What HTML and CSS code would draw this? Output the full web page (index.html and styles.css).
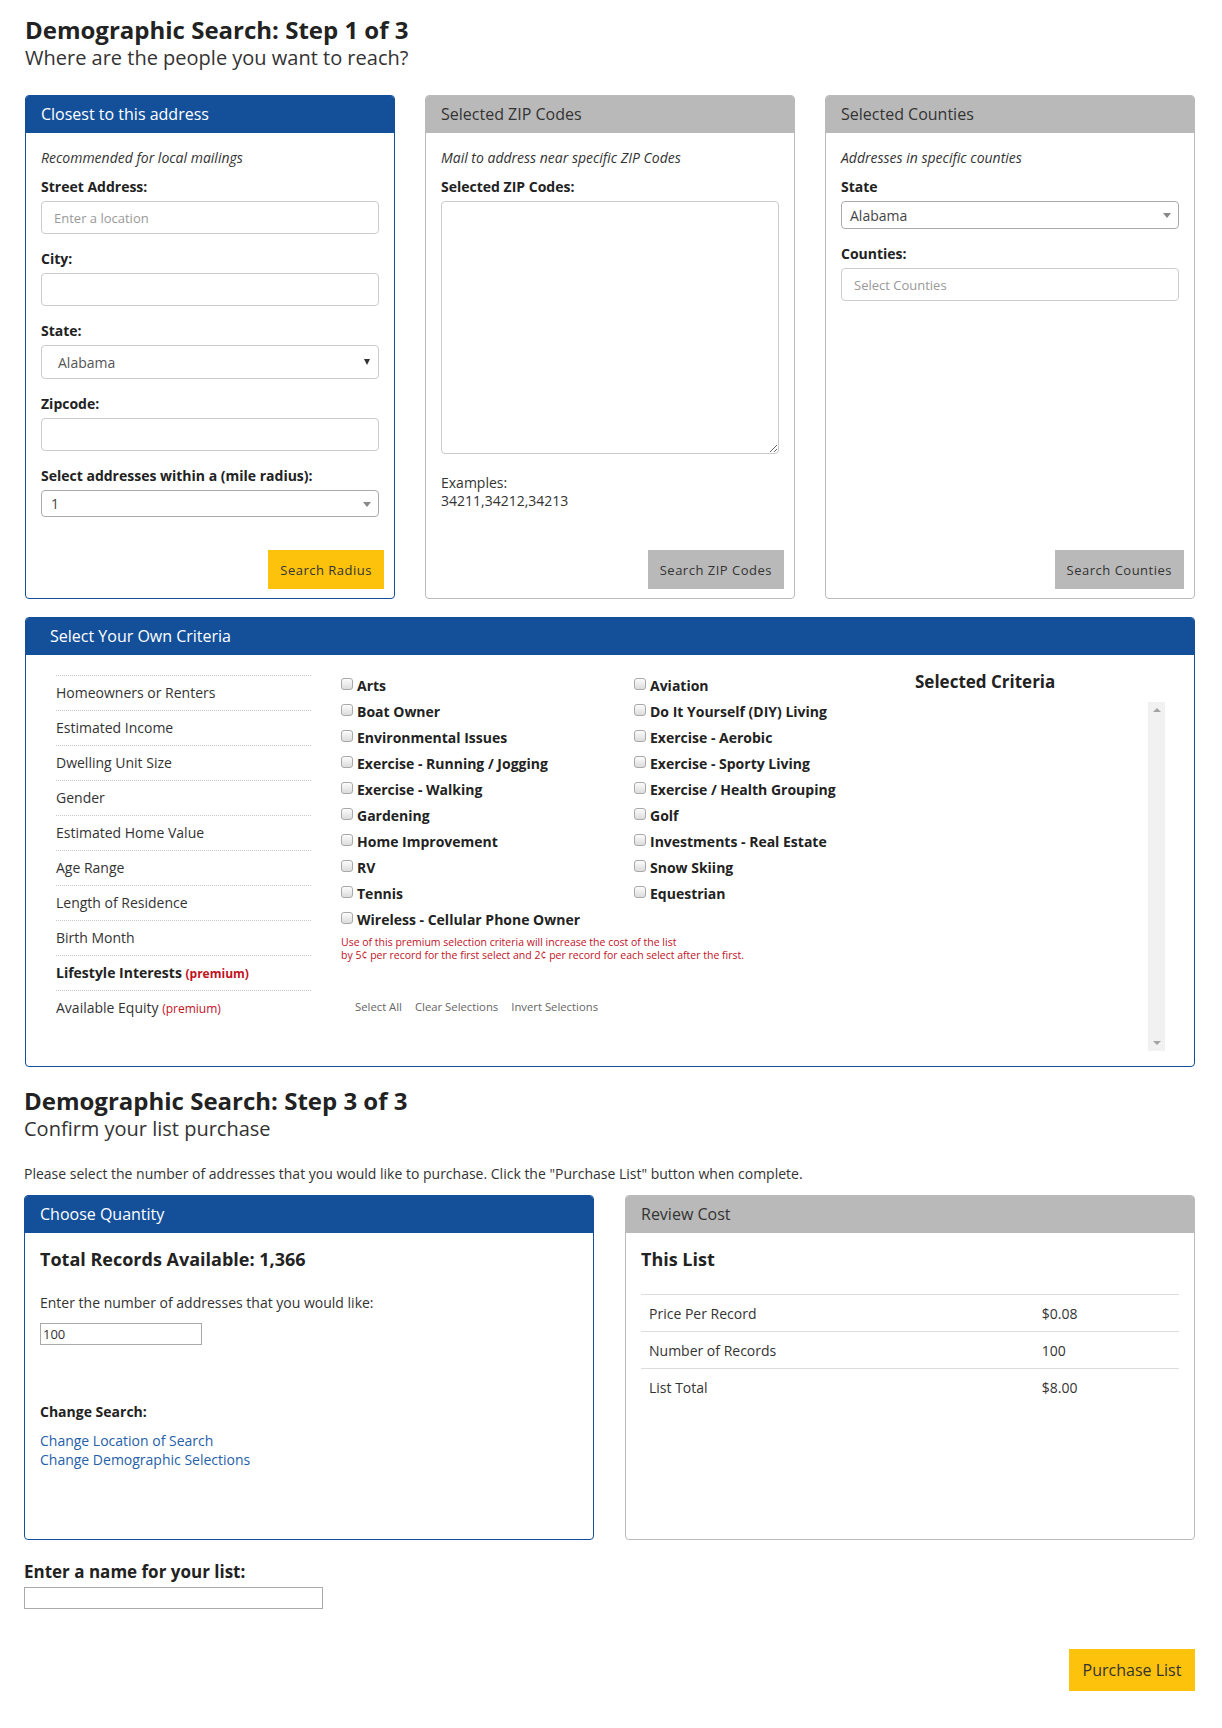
FILE: index.html
```html
<!DOCTYPE html>
<html lang="en">
<head>
<meta charset="utf-8">
<title>Demographic Search</title>
<link rel="stylesheet" href="styles.css">
</head>
<body>
<div class="page">
  <header class="step-head">
    <h1 class="step-title">Demographic Search: Step 1 of 3</h1>
    <p class="step-sub">Where are the people you want to reach?</p>
  </header>

  <div class="loc-row">
    <section class="panel panel-blue">
      <div class="panel-head">Closest to this address</div>
      <div class="panel-body">
        <p class="hint">Recommended for local mailings</p>
        <div class="field first">
          <label class="field-label">Street Address:</label>
          <input class="text-input" type="text" placeholder="Enter a location">
        </div>
        <div class="field">
          <label class="field-label">City:</label>
          <input class="text-input" type="text">
        </div>
        <div class="field">
          <label class="field-label">State:</label>
          <div class="fake-select native"><span class="sel-text">Alabama</span><span class="caret-dark"></span></div>
        </div>
        <div class="field">
          <label class="field-label">Zipcode:</label>
          <input class="text-input" type="text">
        </div>
        <div class="field">
          <label class="field-label">Select addresses within a (mile radius):</label>
          <div class="fake-select s2 radius"><span class="sel-text">1</span><span class="caret-grey"></span></div>
        </div>
      </div>
      <div class="panel-foot"><button class="btn btn-yellow" type="button">Search Radius</button></div>
    </section>

    <section class="panel">
      <div class="panel-head">Selected ZIP Codes</div>
      <div class="panel-body">
        <p class="hint">Mail to address near specific ZIP Codes</p>
        <div class="field first">
          <label class="field-label">Selected ZIP Codes:</label>
          <textarea class="zip-area"></textarea>
        </div>
        <p class="examples">Examples:<br>34211,34212,34213</p>
      </div>
      <div class="panel-foot"><button class="btn btn-grey" type="button">Search ZIP Codes</button></div>
    </section>

    <section class="panel">
      <div class="panel-head">Selected Counties</div>
      <div class="panel-body">
        <p class="hint">Addresses in specific counties</p>
        <div class="field first">
          <label class="field-label">State</label>
          <div class="fake-select s2 county-state"><span class="sel-text">Alabama</span><span class="caret-grey"></span></div>
        </div>
        <div class="field">
          <label class="field-label">Counties:</label>
          <input class="text-input counties" type="text" placeholder="Select Counties">
        </div>
      </div>
      <div class="panel-foot"><button class="btn btn-grey" type="button">Search Counties</button></div>
    </section>
  </div>

  <section class="panel panel-blue criteria">
    <div class="panel-head wide">Select Your Own Criteria</div>
    <div class="criteria-body">
      <ul class="cat-list">
        <li>Homeowners or Renters</li>
        <li>Estimated Income</li>
        <li>Dwelling Unit Size</li>
        <li>Gender</li>
        <li>Estimated Home Value</li>
        <li>Age Range</li>
        <li>Length of Residence</li>
        <li>Birth Month</li>
        <li class="active">Lifestyle Interests <span class="premium">(premium)</span></li>
        <li>Available Equity <span class="premium">(premium)</span></li>
      </ul>

      <div class="interests">
        <div class="cb-cols">
          <ul class="cb-col first-col">
            <li><span class="cb"></span>Arts</li>
            <li><span class="cb"></span>Boat Owner</li>
            <li><span class="cb"></span>Environmental Issues</li>
            <li><span class="cb"></span>Exercise - Running / Jogging</li>
            <li><span class="cb"></span>Exercise - Walking</li>
            <li><span class="cb"></span>Gardening</li>
            <li><span class="cb"></span>Home Improvement</li>
            <li><span class="cb"></span>RV</li>
            <li><span class="cb"></span>Tennis</li>
            <li><span class="cb"></span>Wireless - Cellular Phone Owner</li>
          </ul>
          <ul class="cb-col">
            <li><span class="cb"></span>Aviation</li>
            <li><span class="cb"></span>Do It Yourself (DIY) Living</li>
            <li><span class="cb"></span>Exercise - Aerobic</li>
            <li><span class="cb"></span>Exercise - Sporty Living</li>
            <li><span class="cb"></span>Exercise / Health Grouping</li>
            <li><span class="cb"></span>Golf</li>
            <li><span class="cb"></span>Investments - Real Estate</li>
            <li><span class="cb"></span>Snow Skiing</li>
            <li><span class="cb"></span>Equestrian</li>
          </ul>
        </div>
        <p class="premium-note">Use of this premium selection criteria will increase the cost of the list<br>by 5¢ per record for the first select and 2¢ per record for each select after the first.</p>
        <div class="sel-links"><a>Select All</a><a>Clear Selections</a><a>Invert Selections</a></div>
      </div>

      <div class="selected">
        <h3 class="selected-title">Selected Criteria</h3>
        <div class="sel-box">
          <div class="scrollbar"><span class="sb-up"></span><span class="sb-down"></span></div>
        </div>
      </div>
    </div>
  </section>

  <section class="confirm">
    <h1 class="step-title">Demographic Search: Step 3 of 3</h1>
    <p class="step-sub">Confirm your list purchase</p>
    <p class="instructions">Please select the number of addresses that you would like to purchase. Click the "Purchase List" button when complete.</p>

    <div class="confirm-row">
      <section class="panel panel-blue tall">
        <div class="panel-head">Choose Quantity</div>
        <div class="panel-body qty-body">
          <h3 class="box-title">Total Records Available: 1,366</h3>
          <p class="qty-label">Enter the number of addresses that you would like:</p>
          <input class="plain-input qty-input" type="text" value="100">
          <p class="change-label">Change Search:</p>
          <div class="change-links">
            <a>Change Location of Search</a>
            <a>Change Demographic Selections</a>
          </div>
        </div>
      </section>

      <section class="panel tall">
        <div class="panel-head">Review Cost</div>
        <div class="panel-body qty-body">
          <h3 class="box-title">This List</h3>
          <table class="cost-table">
            <tr><td>Price Per Record</td><td>$0.08</td></tr>
            <tr><td>Number of Records</td><td>100</td></tr>
            <tr><td>List Total</td><td>$8.00</td></tr>
          </table>
        </div>
      </section>
    </div>

    <div class="name-field">
      <label class="name-label">Enter a name for your list:</label>
      <input class="plain-input name-input" type="text">
    </div>

    <div class="purchase-row"><button class="btn btn-yellow btn-purchase" type="button">Purchase List</button></div>
  </section>
</div>
</body>
</html>
```

FILE: styles.css
```css
* { box-sizing: border-box; }

body {
  margin: 0;
  font-family: "Open Sans", "Liberation Sans", sans-serif;
  font-size: 14px;
  color: #333;
  background: #fff;
}

.page {
  width: 1170px;
  margin: 0 0 0 25px;
  padding: 16px 0 38px;
}

.step-title {
  margin: 0;
  font-size: 24px;
  line-height: 28px;
  font-weight: 700;
  color: #222;
}

.step-sub {
  margin: 1px 0 0;
  font-size: 20px;
  line-height: 26px;
  color: #333;
}

/* ---------- panels ---------- */
.panel {
  display: flex;
  flex-direction: column;
  border: 1px solid #bbb;
  border-radius: 4px;
  overflow: hidden;
  background: #fff;
}

.panel-blue { border-color: #14509a; }

.panel-head {
  height: 37px;
  line-height: 37px;
  padding: 0 15px;
  font-size: 16px;
  background: #b9b9b9;
  color: #333;
}

.panel-blue .panel-head {
  background: #14509a;
  color: #fff;
}

.panel-head.wide { padding-left: 24px; }

.panel-body { padding: 15px 15px 0; }

.panel-foot {
  margin-top: auto;
  padding: 33px 10px 9px;
  display: flex;
  justify-content: flex-end;
}

.loc-row {
  display: flex;
  gap: 30px;
  margin-top: 24px;
}

.loc-row .panel { flex: 1; }

.hint {
  margin: 0 0 9px;
  font-style: italic;
  font-size: 14px;
  line-height: 20px;
  color: #333;
}

.field { margin-top: 15px; }
.field.first { margin-top: 0; }

.field-label {
  display: block;
  font-weight: 700;
  line-height: 20px;
  margin-bottom: 4px;
  color: #222;
}

.text-input {
  display: block;
  width: 100%;
  height: 33px;
  padding: 0 12px;
  border: 1px solid #ccc;
  border-radius: 4px;
  font-family: inherit;
  font-size: 13px;
  color: #555;
  outline: none;
}

.text-input::placeholder { color: #999; }

.fake-select {
  position: relative;
  display: flex;
  align-items: center;
  width: 100%;
  border-radius: 4px;
  background: #fff;
}

.fake-select.native {
  height: 34px;
  border: 1px solid #ccc;
  padding-left: 16px;
  color: #555;
}

.fake-select.s2 {
  border: 1px solid #aaa;
  color: #444;
}

.fake-select.radius { height: 27px; padding-left: 9px; }
.fake-select.county-state { height: 28px; padding-left: 8px; }

.caret-dark {
  position: absolute;
  right: 8px;
  top: 13px;
  width: 0;
  height: 0;
  border-left: 3px solid transparent;
  border-right: 3px solid transparent;
  border-top: 6px solid #333;
}

.caret-grey {
  position: absolute;
  right: 7px;
  top: 50%;
  margin-top: -2px;
  width: 0;
  height: 0;
  border-left: 4px solid transparent;
  border-right: 4px solid transparent;
  border-top: 5px solid #888;
}

.zip-area {
  display: block;
  width: 100%;
  height: 253px;
  border: 1px solid #ccc;
  border-radius: 4px;
  resize: vertical;
  outline: none;
  font-family: inherit;
}

.examples {
  margin: 20px 0 0;
  line-height: 18px;
  font-size: 14px;
  color: #333;
}

.btn {
  border: none;
  border-radius: 0;
  font-family: inherit;
  font-size: 13px;
  letter-spacing: 0.5px;
  color: #333;
  cursor: pointer;
}

.btn-yellow { background: #fdc20c; }
.btn-grey { background: #b9b9b9; }

.loc-row .btn { height: 39px; padding: 0 12px; }

/* ---------- criteria ---------- */
.criteria { margin-top: 18px; }

.criteria-body {
  display: grid;
  grid-template-columns: 285px 574px 1fr;
  padding: 15px 29px 15px 30px;
}

.cat-list {
  list-style: none;
  margin: 5px 30px 0 0;
  padding: 0;
}

.cat-list li {
  height: 35px;
  line-height: 34px;
  border-top: 1px dotted #c8c8c8;
  font-size: 14px;
  color: #333;
}

.cat-list li.active { font-weight: 700; color: #222; }

.premium {
  color: #c1121f;
  font-size: 12px;
}

.cb-cols {
  display: grid;
  grid-template-columns: 293px 1fr;
  margin-top: 2px;
}

.cb-col {
  list-style: none;
  margin: 0;
  padding: 0;
}

.cb-col li {
  display: flex;
  align-items: center;
  height: 26px;
  font-weight: 700;
  font-size: 14px;
  color: #222;
}

.cb {
  display: inline-block;
  width: 12px;
  height: 12px;
  margin: -3px 4px 0 0;
  border: 1px solid #a9a9a9;
  border-radius: 3px;
  background: linear-gradient(#fcfcfc, #dcdcdc);
}

.premium-note {
  margin: 4px 0 0;
  font-size: 10.5px;
  line-height: 13px;
  color: #c1121f;
}

.sel-links {
  display: flex;
  gap: 13px;
  margin-top: 38px;
  padding-left: 14px;
  font-size: 11.3px;
  line-height: 14px;
}

.sel-links a { color: #666; }

.selected-title {
  margin: 0;
  font-size: 17px;
  line-height: 24px;
  font-weight: 700;
  color: #222;
}

.sel-box {
  display: flex;
  justify-content: flex-end;
  height: 349px;
  margin-top: 8px;
}

.scrollbar {
  position: relative;
  width: 17px;
  background: #f1f1f1;
}

.sb-up, .sb-down {
  position: absolute;
  left: 5px;
  width: 0;
  height: 0;
  border-left: 4px solid transparent;
  border-right: 4px solid transparent;
}

.sb-up { top: 6px; border-bottom: 4px solid #a3a3a3; }
.sb-down { bottom: 6px; border-top: 4px solid #a3a3a3; }

/* ---------- confirm ---------- */
.confirm { margin: 20px 0 0 -1px; }

.instructions {
  margin: 23px 0 0;
  font-size: 14px;
  line-height: 18px;
  color: #333;
}

.confirm-row {
  display: flex;
  gap: 31px;
  margin-top: 12px;
}

.confirm-row .panel { flex: 1; min-height: 345px; }

.qty-body { padding: 15px 15px 15px; }

.box-title {
  margin: 0;
  font-size: 18px;
  line-height: 22px;
  font-weight: 700;
  color: #222;
}

.qty-label {
  margin: 23px 0 0;
  line-height: 20px;
  font-size: 14px;
}

.plain-input {
  display: block;
  border: 1px solid #a9a9a9;
  border-radius: 0;
  padding: 0 2px;
  font-family: inherit;
  font-size: 13px;
  color: #333;
  outline: none;
}

.qty-input { width: 162px; height: 22px; margin-top: 10px; }

.change-label {
  margin: 57px 0 0;
  line-height: 20px;
  font-weight: 700;
  color: #222;
}

.change-links {
  display: flex;
  flex-direction: column;
  margin-top: 9px;
  line-height: 19px;
}

.change-links a { color: #2560a8; }

.cost-table {
  width: 100%;
  margin-top: 24px;
  border-collapse: collapse;
  font-size: 14px;
}

.cost-table td {
  height: 37px;
  padding: 0 8px;
  border-top: 1px solid #ddd;
}

.cost-table td:first-child { width: 73%; }

.name-field { margin-top: 21px; }

.name-label {
  display: block;
  font-size: 17px;
  line-height: 22px;
  font-weight: 700;
  color: #222;
}

.name-input { width: 299px; height: 22px; margin-top: 4px; }

.purchase-row {
  display: flex;
  justify-content: flex-end;
  margin-top: 40px;
}

.btn-purchase {
  width: 126px;
  height: 42px;
  font-size: 16px;
  letter-spacing: 0;
}
```
